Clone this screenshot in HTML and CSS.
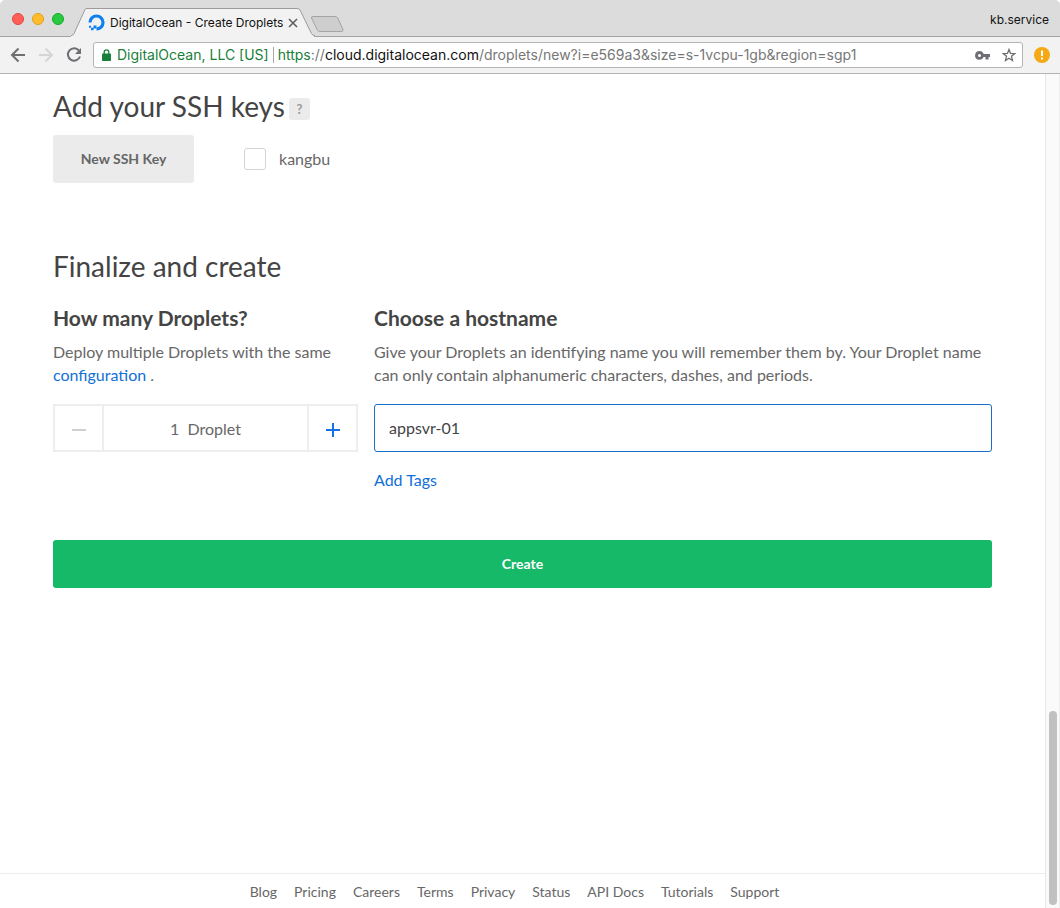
FILE: index.html
```html
<!DOCTYPE html>
<html lang="en">
<head>
<meta charset="utf-8">
<title>DigitalOcean - Create Droplets</title>
<link rel="stylesheet" href="styles.css">
</head>
<body>
<div class="browser">
  <header class="tabstrip">
    <div class="lights"><span class="light red"></span><span class="light yellow"></span><span class="light green"></span></div>
    <div class="tab">
      <svg class="tab-shape" viewBox="0 0 244 30" preserveAspectRatio="none" aria-hidden="true"><path d="M0 30V28.500L3 27L14 1.500Q14.500 .5 16 .5H226Q228 .5 229 2L240.500 27L243 28.500V30Z" fill="#f2f2f2"/><path d="M0 28.500Q2 28.500 3 26.500L14 1.500Q14.500 .5 16 .5H226Q228 .5 229 2L240.500 26.500Q241.500 28.500 244 28.500" fill="none" stroke="#999"/></svg>
      <svg class="favicon" width="17" height="17" viewBox="0 0 17 17" aria-hidden="true"><path d="M2 8.500 A6.500 6.500 0 1 1 8.500 15" fill="none" stroke="#0f80ee" stroke-width="3.200"/><path d="M5.500 11.500H8.500V14.500H5.500zM3 13.800H5.500V16.300H3zM1 11.800H3V13.800H1z" fill="#0f80ee"/></svg>
      <span class="tab-title">DigitalOcean - Create Droplets</span>
      <button class="tab-close" aria-label="Close tab"><svg width="10" height="10" viewBox="0 0 10 10"><path d="M1 1l8 8M9 1l-8 8" stroke="#5a5a5a" stroke-width="1.500"/></svg></button>
    </div>
    <button class="new-tab" aria-label="New tab"><svg width="34" height="18" viewBox="0 0 34 18"><path d="M3 1.500H25Q27 1.500 28 3.500L33 14.500Q33.500 16.500 31 16.500H10Q8 16.500 7 14.500L1.500 3Q1 1.500 3 1.500Z" fill="#cecece" stroke="#a4a4a4"/></svg></button>
    <span class="profile">kb.service</span>
  </header>
  <div class="toolbar">
    <button class="nav" aria-label="Back"><svg width="16" height="16" viewBox="0 0 16 16"><path d="M15 8H2M8.500 1.500L2 8l6.500 6.500" fill="none" stroke="#6e6f72" stroke-width="2"/></svg></button>
    <button class="nav" aria-label="Forward" disabled><svg width="16" height="16" viewBox="0 0 16 16"><path d="M1 8h13M7.500 1.500L14 8l-6.500 6.500" fill="none" stroke="#d5d5d6" stroke-width="2"/></svg></button>
    <button class="nav" aria-label="Reload"><svg width="16" height="16" viewBox="0 0 16 16"><path d="M13 3.600A6.200 6.200 0 1 0 14 9.500" fill="none" stroke="#6e6f72" stroke-width="2"/><path d="M15 1V7H9z" fill="#6e6f72"/></svg></button>
    <div class="omnibox">
      <svg width="9" height="12" viewBox="0 0 9 12" aria-hidden="true"><path d="M.8 4.500H8.200Q9 4.500 9 5.300V11.200Q9 12 8.200 12H.8Q0 12 0 11.200V5.300Q0 4.500.8 4.500Z" fill="#18803a"/><path d="M2.200 5V3.100a2.300 2.300 0 0 1 4.600 0V5" fill="none" stroke="#18803a" stroke-width="1.300"/></svg>
      <span class="owner">DigitalOcean, LLC [US]</span>
      <span class="url"><span class="secure">https</span>://<span class="host">cloud.digitalocean.com</span>/droplets/new?i=e569a3&amp;size=s-1vcpu-1gb&amp;region=sgp1</span>
      <svg class="key" width="15" height="9" viewBox="0 0 15 9" aria-label="Saved password"><path fill-rule="evenodd" d="M4.500 0A4.400 4.400 0 1 0 8.600 6H10.500V8.500H13.500V6H15V3H8.600A4.400 4.400 0 0 0 4.500 0ZM4.500 3A1.500 1.500 0 1 1 4.500 6A1.500 1.500 0 1 1 4.500 3Z" fill="#6e6f72"/></svg>
      <svg class="star" width="14" height="14" viewBox="0 0 14 14" aria-label="Bookmark"><path d="M7 1.500L8.500 5.300 12.800 5.600 9.500 8.300 10.500 12.500 7 10.200 3.500 12.500 4.500 8.300 1.200 5.600 5.500 5.300Z" fill="none" stroke="#6e6f72" stroke-width="1.300"/></svg>
    </div>
    <button class="alert" aria-label="Update available"><svg width="16" height="16" viewBox="0 0 16 16"><circle cx="8" cy="8" r="8" fill="#f4a915"/><path d="M8 3.500V9M8 10.500V12.500" stroke="#fff" stroke-width="2"/></svg></button>
  </div>
  <div class="viewport">
    <div class="page">
      <main class="content">
        <section class="ssh">
          <h2>Add your SSH keys <button class="help">?</button></h2>
          <div class="ssh-row">
            <button class="new-key">New SSH Key</button>
            <label class="key-choice"><input type="checkbox"> <span>kangbu</span></label>
          </div>
        </section>
        <section>
          <h2>Finalize and create</h2>
          <div class="finalize">
            <div>
              <h3>How many Droplets?</h3>
              <p>Deploy multiple Droplets with the same <a href="#">configuration</a> .</p>
              <div class="stepper">
                <button aria-label="Remove one" disabled><svg width="14" height="14" viewBox="0 0 14 14"><path d="M0 7H14" stroke="#d0d0d0" stroke-width="2"/></svg></button>
                <output>1&nbsp; Droplet</output>
                <button aria-label="Add one"><svg width="14" height="14" viewBox="0 0 14 14"><path d="M0 7H14M7 0V14" stroke="#1670e8" stroke-width="2"/></svg></button>
              </div>
            </div>
            <div>
              <h3><label for="hostname">Choose a hostname</label></h3>
              <p>Give your Droplets an identifying name you will remember them by. Your Droplet name can only contain alphanumeric characters, dashes, and periods.</p>
              <input class="hostname" id="hostname" type="text" value="appsvr-01">
              <a class="add-tags" href="#">Add Tags</a>
            </div>
          </div>
          <button class="create">Create</button>
        </section>
      </main>
      <footer class="footer"><a href="#">Blog</a><a href="#">Pricing</a><a href="#">Careers</a><a href="#">Terms</a><a href="#">Privacy</a><a href="#">Status</a><a href="#">API Docs</a><a href="#">Tutorials</a><a href="#">Support</a></footer>
    </div>
    <div class="scrollbar"><div class="thumb"></div></div>
  </div>
</div>
</body>
</html>
```
FILE: styles.css
```css
* { box-sizing: border-box; }
body { margin: 0; background: #fff; font-family: Lato, "Liberation Sans", sans-serif; font-size: 16px; color: #676767; }
button { border: 0; padding: 0; background: none; font: inherit; color: inherit; }
svg { display: block; flex: none; }
h2, h3, p { margin: 0; }
a { color: #1070d8; text-decoration: none; }

.browser { display: flex; flex-direction: column; min-height: 100vh; }

.tabstrip { display: flex; align-items: flex-end; height: 37px; background: #dcdcdc; border-bottom: 1px solid #a3a3a3; border-radius: 5px 5px 0 0; font-family: Inter, sans-serif; font-size: 12px; color: #111; }
.lights { display: flex; gap: 8px; padding: 0 7px 11px 12px; }
.light { width: 12px; height: 12px; border-radius: 50%; border: 1px solid; }
.red { background: #ff5f57; border-color: #e2463f; }
.yellow { background: #ffbd2e; border-color: #e1a116; }
.green { background: #28ca42; border-color: #12ac28; }
.tab { position: relative; display: flex; align-items: center; width: 244px; height: 29px; margin-bottom: -1px; padding: 0 17px; }
.tab-shape { position: absolute; inset: 0; width: 100%; height: 100%; }
.favicon, .tab-title, .tab-close { position: relative; }
.tab-title { flex: 1; margin-left: 5px; white-space: nowrap; }
.new-tab { margin-bottom: 3px; margin-left: -5px; }
.profile { margin-left: auto; padding: 0 11px 9px 0; }

.toolbar { display: flex; align-items: center; height: 37px; padding: 0 10px; gap: 12px; background: #f2f2f2; border-bottom: 1px solid #b4b4b4; }
.omnibox { display: flex; align-items: center; flex: 1; min-width: 0; height: 26px; margin: 0 -1px; padding: 0 6px 0 8px; background: #fff; border: 1px solid #b4b4b4; border-radius: 3px; font-family: Inter, sans-serif; font-size: 14px; line-height: 16px; }
.owner { padding: 0 4px 0 6px; border-right: 1px solid #a8a8a8; color: #18803a; white-space: nowrap; }
.url { flex: 1; padding-left: 4px; overflow: hidden; color: #777; white-space: nowrap; }
.secure { color: #18803a; }
.host { color: #111; }
.star { margin-left: 12px; }

.viewport { display: flex; flex: 1; }
.page { display: flex; flex: 1; flex-direction: column; min-width: 0; }
.content { flex: 1; padding: 15px 53px; }
h2 { font-size: 28px; line-height: 34px; font-weight: 400; color: #444; }
h3 { font-size: 21px; line-height: 24px; font-weight: 700; color: #444; }
p { margin-top: 10px; line-height: 23px; }
.ssh { margin-bottom: 66px; }
.help { width: 21px; height: 22px; margin-left: -3px; background: #ebebeb; border-radius: 3px; font-size: 13px; line-height: 22px; font-weight: 700; color: #999; vertical-align: 3px; }
.ssh-row { display: flex; gap: 50px; margin-top: 12px; }
.new-key { width: 141px; height: 48px; padding-bottom: 2px; background: #ebebeb; border-radius: 3px; font-size: 14px; font-weight: 700; color: #666; }
.key-choice { display: flex; align-items: center; gap: 13px; }
.key-choice span { padding-bottom: 2px; }
.key-choice input { appearance: none; width: 22px; height: 22px; margin: 0; background: #fff; border: 1px solid #d4d4d4; border-radius: 3px; }

.finalize { display: grid; grid-template-columns: 305px 1fr; gap: 16px; margin-top: 23px; }
.stepper { display: flex; height: 48px; margin-top: 18px; border: 2px solid #eee; }
.stepper button { display: grid; place-items: center; width: 47px; padding-top: 3px; }
.stepper output { display: grid; place-items: center; flex: 1; border: solid #eee; border-width: 0 2px; }
.hostname { display: block; width: 100%; height: 48px; margin-top: 18px; padding: 0 14px 2px; border: 1px solid #1b6fc4; border-radius: 3px; outline: 0; font: inherit; color: #444; }
.add-tags { display: inline-block; margin-top: 16px; line-height: 24px; }
.create { display: block; width: 100%; height: 48px; margin-top: 48px; padding-bottom: 2px; background: #15b968; border-radius: 3px; font-size: 14px; font-weight: 700; color: #fff; }

.footer { display: flex; justify-content: center; gap: 17px; padding: 8px 16px 7px 0; border-top: 1px solid #ececec; font-size: 14px; line-height: 19px; }
.footer a { color: #676767; }
.scrollbar { display: flex; flex-direction: column; justify-content: flex-end; width: 15px; padding: 3px; background: #fafafa; border-left: 1px solid #e8e8e8; border-right: 1px solid #ededed; }
.thumb { width: 8px; height: 194px; background: #c1c1c1; border-radius: 4px; }
```
